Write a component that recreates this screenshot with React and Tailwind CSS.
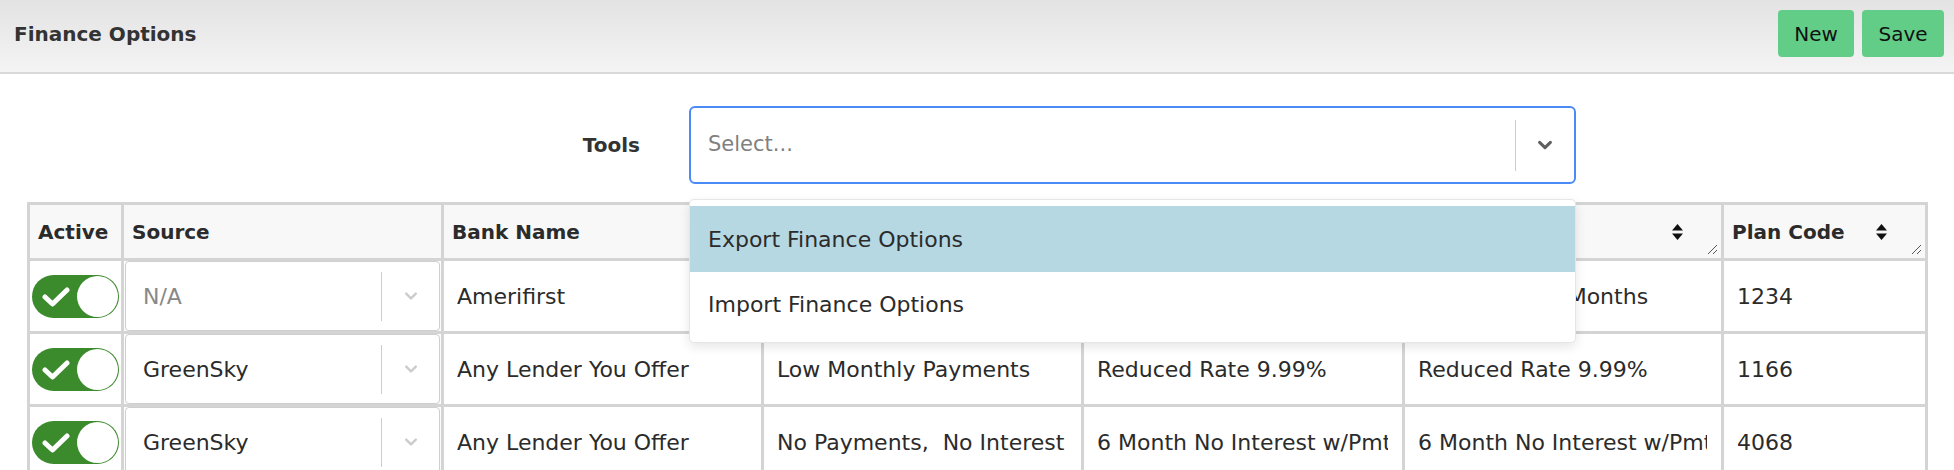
import React from 'react';

const SortIcon = () => (
  <svg width="11" height="16" viewBox="0 0 11 16" className="shrink-0">
    <path d="M5.5 0 L11 6.5 L0 6.5 Z" fill="#111" />
    <path d="M5.5 16 L11 9.5 L0 9.5 Z" fill="#111" />
  </svg>
);

const ResizeGrip = () => (
  <svg width="11" height="11" viewBox="0 0 11 11" className="absolute right-[3px] bottom-[3px]">
    <path d="M10 1 L1 10 M10 6 L6 10" stroke="#555" strokeWidth="1" />
  </svg>
);

const Chevron = ({ color, size = 16, weight = 3 }) => (
  <svg width={size} height={size} viewBox="0 0 20 20">
    <path d="M4 7 L10 13 L16 7" fill="none" stroke={color} strokeWidth={weight} strokeLinecap="round" strokeLinejoin="round" />
  </svg>
);

const Toggle = () => (
  <div className="relative w-[87px] h-[43px] rounded-full bg-[#3b8a2b] mx-auto">
    <svg width="28" height="22" viewBox="0 0 28 22" className="absolute left-[10px] top-[11px]">
      <path d="M3 11 L10.5 18 L25 4" fill="none" stroke="white" strokeWidth="5" strokeLinecap="round" strokeLinejoin="round" />
    </svg>
    <div className="absolute right-[1px] top-[1px] w-[41px] h-[41px] rounded-full bg-white" />
  </div>
);

const SourceSelect = ({ value, placeholder }) => (
  <div className="mx-[1px] h-[70px] flex items-center bg-white border border-[#cfcfcf] rounded-[4px] shadow-[0_1px_2px_rgba(0,0,0,0.06)]">
    <div className={`flex-1 pl-[17px] text-[22px] ${placeholder ? 'text-[#888]' : 'text-[#2b2b2b]'}`}>{value}</div>
    <div className="w-px h-[49px] bg-[#cccccc]" />
    <div className="w-[57px] flex justify-center">
      <Chevron color="#cccccc" />
    </div>
  </div>
);

// headers for the columns hidden behind the open Tools menu are left blank
const columns = [
  { key: 'active', label: 'Active', width: 94 },
  { key: 'source', label: 'Source', width: 320 },
  { key: 'bank', label: 'Bank Name', width: 320, sort: true },
  { key: 'promo', label: '', width: 320, sort: true },
  { key: 'plan', label: '', width: 321, sort: true },
  { key: 'desc', label: '', width: 319, sort: true },
  { key: 'code', label: 'Plan Code', width: 204, sort: true },
];

const rows = [
  { source: 'N/A', placeholder: true, bank: 'Amerifirst', promo: '', plan: '', desc: 'No Interest 6 Months', code: '1234' },
  { source: 'GreenSky', bank: 'Any Lender You Offer', promo: 'Low Monthly Payments', plan: 'Reduced Rate 9.99%', desc: 'Reduced Rate 9.99%', code: '1166' },
  { source: 'GreenSky', bank: 'Any Lender You Offer', promo: 'No Payments,  No Interest', plan: '6 Month No Interest w/Pmt', desc: '6 Month No Interest w/Pmt', code: '4068' },
];

const TextCell = ({ children }) => (
  <td className="border-[3px] border-[#d4d4d4] pl-[13px] pr-[14px] text-[22px] text-[#2b2b2b]">
    <div className="overflow-hidden whitespace-pre">{children}</div>
  </td>
);

const App = () => {
  return (
    <div className="w-[1954px] h-[470px] overflow-hidden bg-white font-['DejaVu_Sans',sans-serif] text-[#333]">
      <header className="h-[74px] flex items-center justify-between pl-[14px] pr-[10px] pb-[5px] bg-linear-to-b from-[#e3e3e3] to-[#f4f4f4] border-b-2 border-[#d9d9d9]">
        <h1 className="text-[20px] font-bold text-[#333]">Finance Options</h1>
        <div className="flex gap-[8px]">
          <button className="w-[76px] h-[47px] rounded-[4px] bg-[#62cd87] text-[20px] text-[#111]">New</button>
          <button className="w-[82px] h-[47px] rounded-[4px] bg-[#62cd87] text-[20px] text-[#111]">Save</button>
        </div>
      </header>

      <div className="flex items-center mt-[32px]">
        <div className="w-[689px] flex justify-end pr-[49px] text-[20px] font-bold text-[#333]">Tools</div>
        <div className="relative w-[887px] h-[78px]">
          <div className="h-full flex items-center border-2 border-[#4a8af4] rounded-[6px] bg-white">
            <div className="flex-1 pl-[17px] text-[21px] text-[#808080]">Select...</div>
            <div className="w-px h-[51px] bg-[#cccccc]" />
            <div className="w-[58px] flex justify-center">
              <Chevron color="#5f5f5f" size={18} weight={3.4} />
            </div>
          </div>
          <div className="absolute left-0 right-0 top-[93px] z-10 bg-white rounded-[5px] border border-[#e6e6e6] shadow-[0_4px_11px_rgba(0,0,0,0.1)] py-[6px]">
            <div className="h-[66px] flex items-center pl-[18px] bg-[#b6d8e3] text-[22px] text-[#2b2b2b]">Export Finance Options</div>
            <div className="h-[64px] flex items-center pl-[18px] text-[22px] text-[#2b2b2b]">Import Finance Options</div>
          </div>
        </div>
      </div>

      <table className="mt-[18px] ml-[27px] border-collapse table-fixed w-[1898px]">
        <colgroup>
          {columns.map(c => (
            <col key={c.key} style={{ width: c.width }} />
          ))}
        </colgroup>
        <thead>
          <tr className="h-[56px] bg-[#f8f8f8]">
            {columns.map(c => (
              <th key={c.key} className="relative border-[3px] border-[#d4d4d4] pl-[8px] text-left text-[20px] font-bold text-[#2b2b2b]">
                <div className="flex items-center">
                  <span className="whitespace-nowrap">{c.label}</span>
                  {c.sort && <span className="ml-auto mr-[38px]"><SortIcon /></span>}
                </div>
                {c.sort && <ResizeGrip />}
              </th>
            ))}
          </tr>
        </thead>
        <tbody>
          {rows.map((r, i) => (
            <tr key={i} className="h-[72px]">
              <td className="border-[3px] border-[#d4d4d4] p-0">
                <Toggle />
              </td>
              <td className="border-[3px] border-[#d4d4d4] p-0">
                <SourceSelect value={r.source} placeholder={r.placeholder} />
              </td>
              <TextCell>{r.bank}</TextCell>
              <TextCell>{r.promo}</TextCell>
              <TextCell>{r.plan}</TextCell>
              <TextCell>{r.desc}</TextCell>
              <TextCell>{r.code}</TextCell>
            </tr>
          ))}
        </tbody>
      </table>
    </div>
  );
};

export default App;
